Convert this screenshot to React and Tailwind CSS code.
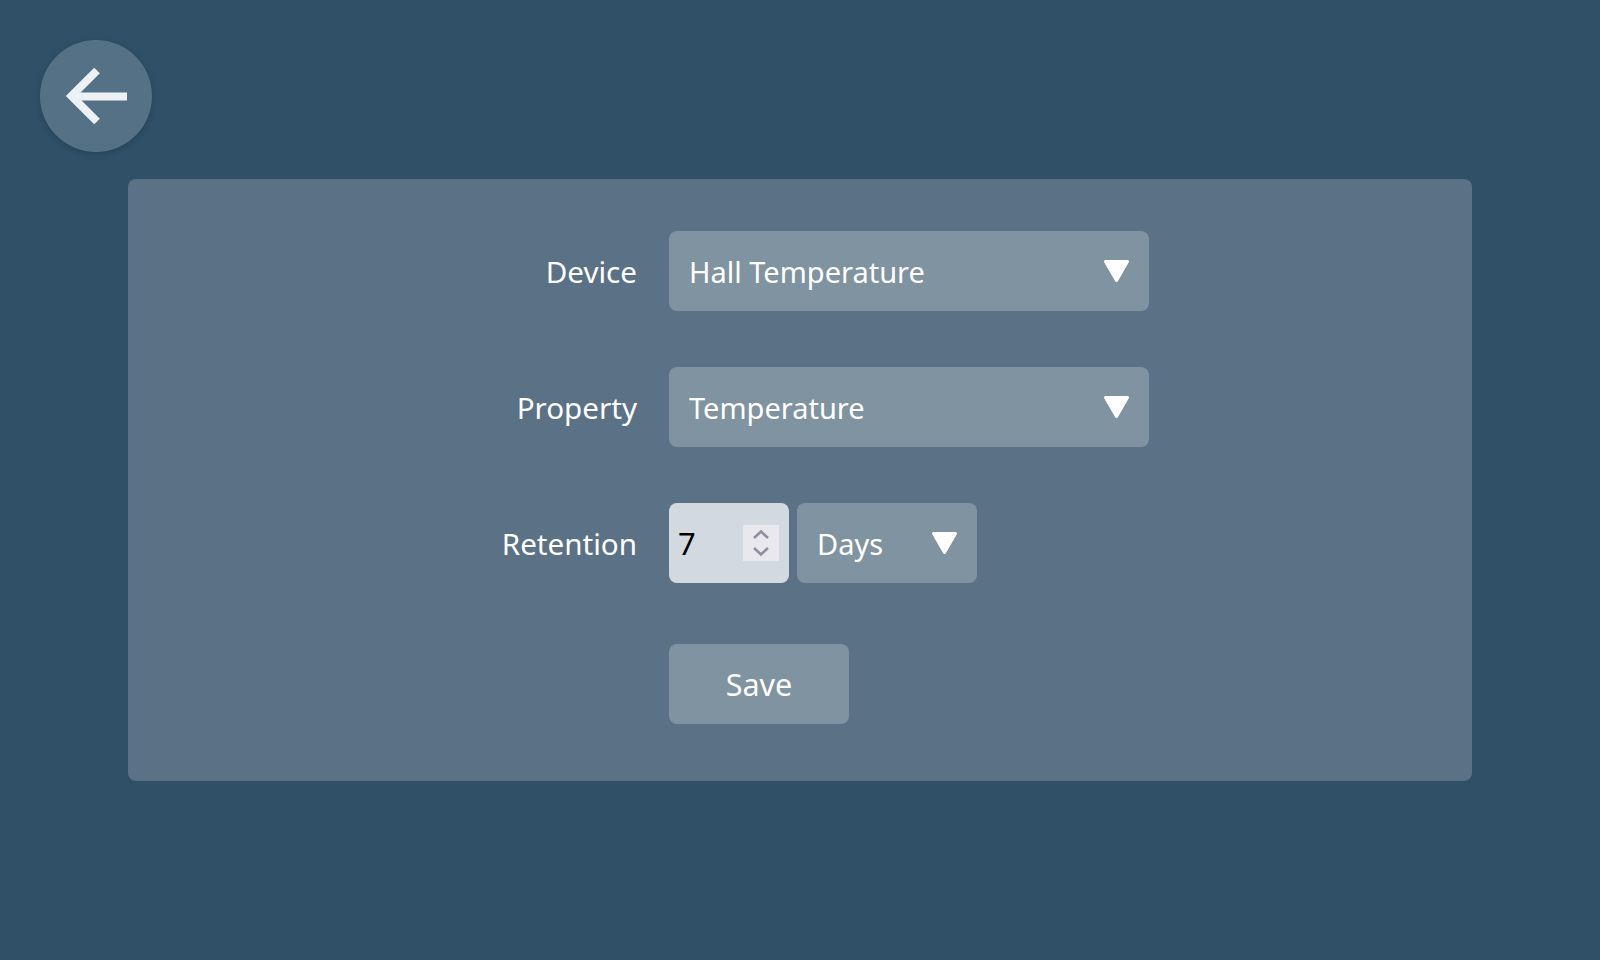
function Triangle() {
  return (
    <svg width="26" height="24" viewBox="0 0 26 24" className="pointer-events-none absolute right-[19px] top-[28px]">
      <path d="M1.5 2.5H23.5L12.5 21.5Z" fill="#fff" stroke="#fff" strokeWidth="3" strokeLinejoin="round" />
    </svg>
  )
}

function Dropdown({ value, options, className }) {
  return (
    <div className={`relative ${className}`}>
      <select
        defaultValue={value}
        className="h-20 w-full appearance-none rounded-lg bg-[#8093a0] pl-5 pt-0.5 text-[29px] text-white outline-none"
      >
        {options.map((o) => (
          <option key={o}>{o}</option>
        ))}
      </select>
      <Triangle />
    </div>
  )
}

function Row({ label, children, className }) {
  return (
    <div className={`flex items-center gap-8 ${className}`}>
      <label className="w-[509px] pt-0.5 text-right text-[29.6px] text-white">{label}</label>
      {children}
    </div>
  )
}

export default function App() {
  return (
    <div className="h-[960px] overflow-hidden bg-[#2f5066] pt-10 font-['Noto_Sans',sans-serif]">
      <button className="ml-10 flex size-28 items-center justify-center rounded-full bg-[#557186] shadow-[0_2px_6px_rgba(0,0,0,0.15)]">
        <svg width="112" height="112" viewBox="0 0 112 112" fill="none" stroke="#eef1f4" strokeWidth="8">
          <path d="M57 30.5 31.5 56 57 81.5" />
          <path d="M36 56.5H87" />
        </svg>
      </button>

      <div className="mx-auto mt-[27px] h-[602px] w-[1344px] rounded-lg bg-[#5b7186] pt-[52px]">
        <Row label="Device">
          <Dropdown value="Hall Temperature" options={['Hall Temperature']} className="w-[480px]" />
        </Row>
        <Row label="Property" className="mt-14">
          <Dropdown value="Temperature" options={['Temperature']} className="w-[480px]" />
        </Row>
        <Row label="Retention" className="mt-14">
          <div className="flex gap-2">
            <div className="relative w-[120px]">
              <input
                type="number"
                defaultValue={7}
                className="h-20 w-full appearance-none rounded-lg bg-[#d2dae0] pl-[9px] text-[31px] text-black outline-none [&::-webkit-inner-spin-button]:appearance-none"
              />
              <svg width="36" height="36" viewBox="0 0 36 36" fill="none" stroke="#8f8f9d" strokeWidth="2.5" className="pointer-events-none absolute left-[74px] top-[22px] bg-[#e9e9ed]">
                <path d="M11 13 18 6.5 25 13" />
                <path d="M11 23 18 29.5 25 23" />
              </svg>
            </div>
            <Dropdown value="Days" options={['Days', 'Hours']} className="w-[180px]" />
          </div>
        </Row>
        <div className="ml-[541px] mt-[61px]">
          <button className="h-20 w-[180px] rounded-lg bg-[#8093a0] pt-0.5 text-[30.5px] text-white">Save</button>
        </div>
      </div>
    </div>
  )
}
